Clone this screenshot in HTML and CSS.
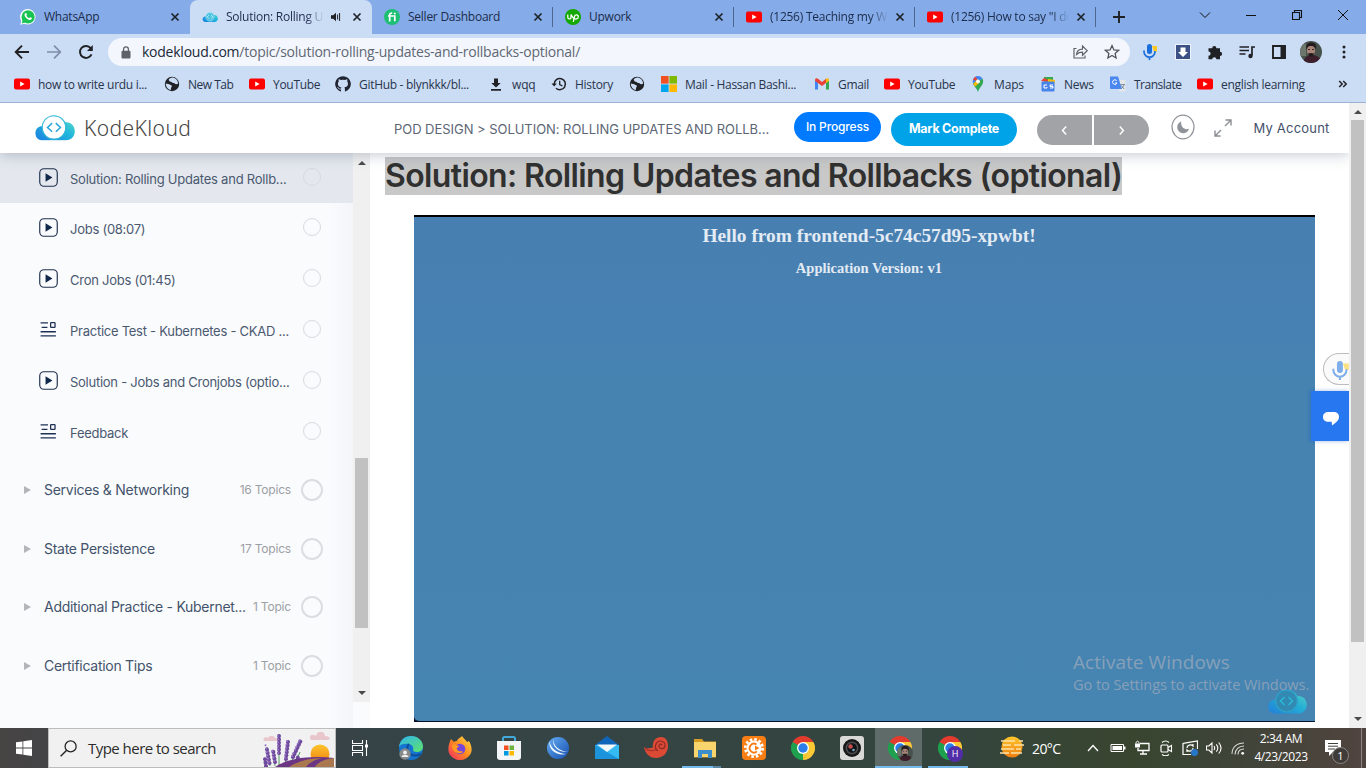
FILE: index.html
```html
<!DOCTYPE html>
<html lang="en">
<head>
<meta charset="utf-8">
<title>Solution: Rolling Updates and Rollbacks</title>
<link rel="stylesheet" href="styles.css">
</head>
<body>
<svg class="defs" width="0" height="0" aria-hidden="true">
  <defs>
    <linearGradient id="cl1" x1="0" y1="1" x2="1" y2="0"><stop offset="0" stop-color="#1b7fe0"/><stop offset=".55" stop-color="#1fb6dc"/><stop offset="1" stop-color="#5fe0c4"/></linearGradient>
    <linearGradient id="edg" x1="0" y1="0" x2="1" y2="1"><stop offset="0" stop-color="#2fb5ee"/><stop offset="1" stop-color="#5fe36b"/></linearGradient>
    <linearGradient id="ff" x1="1" y1="0" x2="0" y2="1"><stop offset="0" stop-color="#ffe14a"/><stop offset=".5" stop-color="#ff8a1f"/><stop offset="1" stop-color="#f5246a"/></linearGradient>
    <linearGradient id="sun" x1="0" y1="0" x2="0" y2="1"><stop offset="0" stop-color="#fdc62c"/><stop offset="1" stop-color="#ef7d10"/></linearGradient>
    <linearGradient id="ball" x1="0" y1="0" x2="1" y2="1"><stop offset="0" stop-color="#65aef5"/><stop offset="1" stop-color="#174fae"/></linearGradient>
    <symbol id="x" viewBox="0 0 10 10"><path d="M1.500 1.500l7 7m0-7l-7 7" stroke="#1f2328" stroke-width="1.700"/></symbol>
    <symbol id="yt" viewBox="0 0 16 16"><rect y="2.400" width="16" height="11.200" rx="2" fill="#f00"/><path d="M6.200 5.600v4.800L10.600 8z" fill="#fff"/></symbol>
    <symbol id="globe" viewBox="0 0 16 16"><circle cx="8" cy="8" r="7.200" fill="#202124"/><path d="M8.600 1.600c-2 .2-3.600 1.200-4 2.500 1 .6.500 1.800 2.200 1.700 1.500 0 1.100 1.500 2.700 1.300 1.300-.2 1.200 1.200 2.600 1.200l2-.6c0-3-2.300-5.700-5.500-6.100zM1.800 7.600c1.500.3 3 .4 4.700 1.500 1.600.3 1.700 1.300.9 2.100-.7.8-.2 1.600-.6 2.900-3-.7-5.100-3.400-5-6.500z" fill="#cbdcf5"/></symbol>
    <symbol id="cloud" viewBox="0 0 40 25"><path d="M7 24.500a7 7 0 0 1-.5-13.600c.8 0 1.600-.1 2.500.2A11.500 11.500 0 0 1 30.500 7c5.500-.6 9.300 3.600 9.300 8.700 0 5-3.600 8.800-8.400 8.800z" fill="url(#cl1)"/></symbol>
    <symbol id="play" viewBox="0 0 18 18"><rect x=".7" y=".7" width="16.600" height="16.600" rx="4" fill="none" stroke="#1e2f4d" stroke-width="1.100"/><path d="M6.200 5v8l6.500-4z" fill="#12284b"/></symbol>
    <symbol id="quiz" viewBox="0 0 18 18"><path d="M1.500 2.700H8.500M2.500 7h5.500M1.500 11.100H16M1.500 15H16" stroke="#1e2f55" stroke-width="1.300"/><rect x="11" y="2.500" width="4.200" height="4.500" rx=".6" fill="none" stroke="#1e2f55" stroke-width="1.200"/></symbol>
    <symbol id="chrome" viewBox="0 0 24 24"><path d="M12 12L1.600 6A12 12 0 0 1 22.400 6z" fill="#e33b2e"/><path d="M12 12L22.400 6A12 12 0 0 1 12 24z" fill="#fcc934"/><path d="M12 12v12A12 12 0 0 1 1.600 6z" fill="#1fa04f"/><path d="M12 6h10.400L17 13z" fill="#fcc934"/><path d="M6.800 15L1.600 6 12 6z" fill="#1fa04f"/><path d="M12 6H1.600L7 9z" fill="#e33b2e"/><path d="M17.200 15L12 24 7 15z" fill="#1fa04f"/><path d="M17.200 15L12 24v-6z" fill="#fcc934"/><circle cx="12" cy="12" r="6" fill="#fff"/><circle cx="12" cy="12" r="4.700" fill="#2b7de9"/></symbol>
    <symbol id="face" viewBox="0 0 22 22"><clipPath id="fc"><circle cx="11" cy="11" r="11"/></clipPath><g clip-path="url(#fc)"><path fill="#48524c" d="M0 0h22v22H0z"/><path fill="#6d766b" d="M0 3h6v12H0z"/><path fill="#3c1f2b" d="M3 22c1-6 5-8 9-8s7 2 10 5v5z"/><ellipse cx="11" cy="9.500" rx="4" ry="5.500" fill="#a98679"/><path d="M6.500 8.500c-1-5 1-7 5-7s5.500 3 4.300 7C15 6 14 5 11 5S7.500 6 6.500 8.500zM8 12.500c2-.8 4-.8 6 0l-1 3h-4z" fill="#241b1c"/><path d="M8 8.500h2m2 0h2" stroke="#332323"/></g></symbol>
    <symbol id="mic" viewBox="0 0 16 16"><path fill="#f9c921" d="M10 2h5v5.500h-3z"/><rect x="5" y="0" width="5" height="10" rx="2.500" fill="#1a6fdc"/><path d="M2 6.500v1.200a5.500 5.500 0 0 0 11 0V7M7.500 13v3" fill="none" stroke="#1a6fdc" stroke-width="1.700"/></symbol>
  </defs>
</svg>

<div class="screen">
  <div class="tabstrip">
    <div class="tab first"><svg class="fav" viewBox="0 0 16 16"><path d="M.3 15.700L1.300 12A7.700 7.700 0 1 1 4.300 14.700z" fill="#fff"/><circle cx="8.100" cy="7.900" r="6.600" fill="#18c351"/><path d="M1.700 14.500l1-3.500 2.500 2.500z" fill="#18c351"/><path d="M5.200 4.300c.8-.6 1.200-.2 1.700 1.200.2.500-.6.800-.5 1.200.6 1.200 1.600 2 2.700 2.300.4 0 .7-1 1.200-.8l1.600.9c.1 1-.8 1.900-2 1.900C7 10.700 4.300 7.500 4.500 5.600z" fill="#fff"/></svg><span class="ttl">WhatsApp</span><svg class="cls"><use href="#x"/></svg></div>
    <div class="tab active"><svg class="fav" viewBox="0 -5 40 34"><use href="#cloud" width="40" height="25"/><circle cx="20" cy="11.500" r="10.500" fill="#4fc3df" stroke="#b9e4f5" stroke-width="1.500"/><path d="M17 7.500l-4 4 4 4m6-8l4 4-4 4" fill="none" stroke="#d5f3fa" stroke-width="2"/></svg><span class="ttl short">Solution: Rolling Updates</span><svg class="snd" viewBox="0 0 12 10"><path d="M1 3.300h2.200L6 .8v8.400L3.200 6.700H1z" fill="#202124"/><path d="M7.600 2.500v5M9.600 1v8" stroke="#202124" stroke-width="1"/></svg><svg class="cls"><use href="#x"/></svg></div>
    <div class="tab nosep"><svg class="fav" viewBox="0 0 16 16"><circle cx="8" cy="8" r="8" fill="#1dbf73"/><path d="M4 7h6.800v5.300M5.700 12.500V5.700C5.700 4.400 6.600 4 8.200 4.200" fill="none" stroke="#fff" stroke-width="1.700"/><circle cx="10.800" cy="4.500" r="1" fill="#fff"/></svg><span class="ttl">Seller Dashboard</span><svg class="cls"><use href="#x"/></svg></div>
    <div class="tab"><svg class="fav" viewBox="0 0 16 16"><circle cx="8" cy="8" r="8" fill="#14a800"/><path d="M2.800 5.500v2.800c0 2.200 3.200 2.200 3.200 0V5.500c1 2 2 3.500 3 4M8.300 12.800L9.500 7.500c.6-2.500 4-2 3.800.5-.2 2.300-3 2.500-4.300 1.300" fill="none" stroke="#fff" stroke-width="1.300"/></svg><span class="ttl">Upwork</span><svg class="cls"><use href="#x"/></svg></div>
    <div class="tab"><svg class="fav"><use href="#yt"/></svg><span class="ttl long">(1256) Teaching my Wife</span><svg class="cls"><use href="#x"/></svg></div>
    <div class="tab"><svg class="fav"><use href="#yt"/></svg><span class="ttl long">(1256) How to say "I don't</span><svg class="cls"><use href="#x"/></svg></div>
    <svg class="newtab" viewBox="0 0 12 12"><path d="M6 0v12M0 6h12" stroke="#202124" stroke-width="1.900"/></svg>
    <div class="winbtns">
      <svg viewBox="0 0 12 12"><path d="M1 3.500l5 5 5-5" fill="none" stroke="#111" /></svg>
      <svg viewBox="0 0 12 12"><path d="M1 6.500h10" stroke="#111"/></svg>
      <svg viewBox="0 0 12 12"><path d="M1.500 3.500h7v7h-7zM3.500 3.500v-2h7v7h-2" fill="none" stroke="#111" stroke-width="1.100"/></svg>
      <svg viewBox="0 0 12 12"><path d="M1 1l10 10M11 1L1 11" stroke="#111"/></svg>
    </div>
  </div>

  <div class="toolbar">
    <svg class="nav" viewBox="0 0 16 16"><path d="M15 8H2m6-6.300L1.700 8 8 14.300" fill="none" stroke="#202124" stroke-width="1.900"/></svg>
    <svg class="nav" viewBox="0 0 16 16"><path d="M1 8h13M8 1.700L14.300 8 8 14.300" fill="none" stroke="#7e8da9" stroke-width="1.700"/></svg>
    <svg class="nav" viewBox="0 0 16 16"><path d="M13.500 10.300A6 6 0 1 1 12.700 4.200" fill="none" stroke="#202124" stroke-width="2"/><path d="M14.800 1v6H9z" fill="#202124"/></svg>
    <div class="omni">
      <svg class="lock" viewBox="0 0 10 13"><rect x=".5" y="4.700" width="9" height="7.800" rx="1" fill="#5f6368"/><path d="M2.600 5V3.300a2.400 2.400 0 0 1 4.800 0V5" fill="none" stroke="#5f6368" stroke-width="1.300"/></svg>
      <span class="url"><b>kodekloud.com</b>/topic/solution-rolling-updates-and-rollbacks-optional/</span>
      <svg class="share" viewBox="0 0 16 16"><path d="M4 4.500H1.500V14h11v-2.500M4 10.500c.3-3.500 2.500-5.300 6-5.400V2l4.700 4.700-4.700 4.600V8.200C7.300 8.200 5.500 9 4 10.500z" fill="none" stroke="#5f6368" stroke-width="1.200"/></svg>
      <svg class="star" viewBox="0 0 16 16"><path d="M8 1.600l1.900 4.300 4.700.4-3.500 3.100 1 4.600L8 11.500 3.900 14l1-4.600L1.400 6.300l4.700-.4z" fill="none" stroke="#50565d" stroke-width="1.300"/></svg>
    </div>
    <div class="exts">
      <svg viewBox="0 0 16 16"><use href="#mic"/></svg>
      <svg viewBox="0 0 16 16"><path fill="#eef4ff" d="M0 0h16v16H0z"/><path fill="#3b5185" d="M1 1h14v14H1z"/><path d="M5.500 3.500h5V8H13l-5 5-5-5h2.500z" fill="#fff"/></svg>
      <svg viewBox="0 0 16 16"><path d="M1.500 4.200h3.700a2.100 2.100 0 1 1 4.200 0h3.600v3.600a2.100 2.100 0 1 1 0 4.200v3.300H9.400a2.100 2.100 0 0 0-4.200 0H1.500v-3.500a2.100 2.100 0 0 0 0-4.200z" fill="#202124"/></svg>
      <svg viewBox="0 0 16 16"><path d="M.5 3h9.500M.5 6.500h9.500M.5 10h6M13 11.500V3h3" fill="none" stroke="#202124" stroke-width="1.700"/><circle cx="11.500" cy="12" r="2.200" fill="#202124"/></svg>
      <svg viewBox="0 0 16 16"><path d="M2 2h12v12H2z" fill="none" stroke="#202124" stroke-width="1.900"/><path d="M9.500 2h5v12h-5z" fill="#202124"/></svg>
      <svg class="avatar"><use href="#face"/></svg>
      <svg class="dots" viewBox="0 0 16 16"><circle cx="8" cy="3" r="1.500"/><circle cx="8" cy="8" r="1.500"/><circle cx="8" cy="13" r="1.500"/></svg>
    </div>
  </div>

  <div class="bookmarks">
    <div class="bm w151"><svg><use href="#yt"/></svg><span>how to write urdu i...</span></div>
    <div class="bm w85"><svg><use href="#globe"/></svg><span class="tight">New Tab</span></div>
    <div class="bm w86"><svg><use href="#yt"/></svg><span>YouTube</span></div>
    <div class="bm w153"><svg viewBox="0 0 16 16"><path d="M8 .2a7.800 7.800 0 0 0-2.500 15.200c.4.1.5-.2.5-.4v-1.500c-2.100.5-2.600-.9-2.600-.9-.4-.9-.9-1.100-.9-1.100-.7-.5 0-.5 0-.5.8 0 1.200.8 1.200.8.7 1.200 1.800.9 2.300.7 0-.5.3-.9.5-1.100-1.700-.2-3.600-.9-3.600-3.900 0-.8.3-1.500.8-2.100 0-.2-.3-1 .1-2.100 0 0 .7-.2 2.200.8a7.300 7.300 0 0 1 4 0c1.500-1 2.100-.8 2.100-.8.5 1.100.2 1.900.1 2.100.5.6.8 1.300.8 2.100 0 3-1.900 3.700-3.600 3.900.3.200.5.7.5 1.400V15c0 .2.200.5.6.4A7.800 7.800 0 0 0 8 .2z" fill="#1f2430"/></svg><span>GitHub - blynkkk/bl...</span></div>
    <div class="bm w63"><svg viewBox="0 0 16 16"><path d="M6 2.500h4V7h2.700L8 11.500 3.300 7H6zM3 13h10v1.700H3z" fill="#202124"/></svg><span class="wide">wqq</span></div>
    <div class="bm w78"><svg viewBox="0 0 16 16"><path d="M3.200 8a5.600 5.600 0 1 1 1.800 4.200" fill="none" stroke="#202124" stroke-width="1.500"/><path d="M.5 7.500h5.300L3.200 10.500z" fill="#202124"/><path d="M8.700 4.800v3.700l2.800 1.500" fill="none" stroke="#202124" stroke-width="1.300"/></svg><span>History</span></div>
    <div class="bm w32"><svg><use href="#globe"/></svg></div>
    <div class="bm w153"><svg viewBox="0 0 16 16"><path fill="#f25022" d="M0 0h7.600v7.600H0z"/><path fill="#7fba00" d="M8.400 0H16v7.600H8.400z"/><path fill="#00a4ef" d="M0 8.400h7.600V16H0z"/><path fill="#ffb900" d="M8.400 8.400H16V16H8.400z"/></svg><span>Mail - Hassan Bashi...</span></div>
    <div class="bm w70"><svg viewBox="0 0 16 16"><path d="M1 4v9.500h3V6.500z" fill="#4285f4"/><path d="M15 4v9.500h-3V6.500z" fill="#34a853"/><path d="M1 4c0-2 2-2 3-1.200l4 3.200 4-3.200V7L8 10 1 4.700z" fill="#ea4335"/><path d="M12 2.800c1.500-1 3-.3 3 1.200v1l-3 2.300z" fill="#fbbc04"/></svg><span>Gmail</span></div>
    <div class="bm w86"><svg><use href="#yt"/></svg><span>YouTube</span></div>
    <div class="bm w70"><svg viewBox="0 0 16 16"><path d="M8 16C7.500 12 2.700 10 2.700 5.500A5.300 5.300 0 0 1 8 0v5.500z" fill="#4285f4"/><path d="M3 4A5.400 5.400 0 0 1 6 .5L8 5z" fill="#ea4335"/><path d="M6 .5a5.400 5.400 0 0 1 6.600 2.200L8 6z" fill="#4285f4"/><path d="M3.200 7.500l9.400-4.800C15 8.500 9 11 8 16c-.4-3-3.600-5-4.800-8.500z" fill="#34a853"/><path d="M3.200 7.800L8 3l1 4-4 3.800z" fill="#fbbc04"/><circle cx="8" cy="5.400" r="1.900" fill="#fff"/></svg><span class="wide">Maps</span></div>
    <div class="bm w70"><svg viewBox="0 0 16 16"><path d="M4 1h9v7H4z" fill="#34a853"/><path d="M1 5l3-3 9 4z" fill="#ea4335"/><path d="M8 3l7 1-1 6H8z" fill="#fbbc04"/><rect x="1.500" y="5.500" width="13" height="10" rx="1" fill="#4a84e8"/><path d="M7 9H4v3h3v-1M13 9h-3v1.500h3V12h-3" stroke="#fff" fill="none"/></svg><span>News</span></div>
    <div class="bm w87"><svg viewBox="0 0 16 16"><path d="M7 4h8.500v11.500H9z" fill="#e4e7ea"/><path d="M0 .5h8L12 13H1a1 1 0 0 1-1-1z" fill="#4a87ee"/><path d="M6.700 4.700A2.300 2.300 0 1 0 7 7H5" fill="none" stroke="#fff" stroke-width="1"/><path d="M10.500 8.500H15m-1 0c-.5 2-1.500 3-2.500 4m0-3l2.500 3.500" fill="none" stroke="#708399" stroke-width=".9"/></svg><span class="tight">Translate</span></div>
    <div class="bm"><svg><use href="#yt"/></svg><span>english learning</span></div>
    <svg class="more" viewBox="0 0 10 8"><path d="M1.200 1l3 3-3 3m4-6l3 3-3 3" fill="none" stroke="#202124" stroke-width="1.500"/></svg>
  </div>

  <div class="page">
    <div class="site">
      <header class="head">
        <div class="logo"><svg class="cl" viewBox="0 0 40 25"><use href="#cloud" width="40" height="25"/><circle cx="19.500" cy="12" r="11" fill="#fff"/><circle cx="19.500" cy="12" r="11.500" fill="none" stroke="#35b9da" stroke-width="1"/><path d="M17.700 7.800L13.200 12l4.500 4.200m3.600-8.400l4.500 4.200-4.500 4.200" fill="none" stroke="#28a7d9" stroke-width="1.500"/></svg><span>KodeKloud</span></div>
        <div class="crumb">POD DESIGN &gt; SOLUTION: ROLLING UPDATES AND ROLLB...</div>
        <div class="pill">In Progress</div>
        <div class="btn">Mark Complete</div>
        <div class="pager"><i><svg viewBox="0 0 8 8"><path d="M5.500 .5L2.300 4l3.200 3.500" fill="none" stroke="#fff" stroke-width="1.300"/></svg></i><i><svg viewBox="0 0 8 8"><path d="M2.500 .5L5.700 4 2.500 7.500" fill="none" stroke="#fff" stroke-width="1.300"/></svg></i></div>
        <svg class="moon" viewBox="0 0 24 26"><ellipse cx="12" cy="13" rx="11" ry="11.800" fill="none" stroke="#8f9297" stroke-width="1.200"/><path d="M10.200 7.500a6 6 0 1 0 7.800 7.300c-4.500 1.500-8.500-2-7.800-7.300z" fill="#909399"/></svg>
        <svg class="expand" viewBox="0 0 18 18"><path d="M11.500 1H17v5.500M17 1l-6 6M6.500 17H1v-5.500M1 17l6-6" fill="none" stroke="#8b8e93" stroke-width="1.400"/></svg>
        <span class="acct">My Account</span>
      </header>
      <div class="content">
        <aside class="side">
          <nav class="list">
            <div class="les cur"><svg><use href="#play"/></svg><span>Solution: Rolling Updates and Rollb...</span><i></i></div>
            <div class="les"><svg><use href="#play"/></svg><span>Jobs (08:07)</span><i></i></div>
            <div class="les"><svg><use href="#play"/></svg><span>Cron Jobs (01:45)</span><i></i></div>
            <div class="les"><svg><use href="#quiz"/></svg><span>Practice Test - Kubernetes - CKAD ...</span><i></i></div>
            <div class="les"><svg><use href="#play"/></svg><span>Solution - Jobs and Cronjobs (optio...</span><i></i></div>
            <div class="les"><svg><use href="#quiz"/></svg><span>Feedback</span><i></i></div>
            <div class="sec"><b></b><span>Services &amp; Networking</span><em>16 Topics</em><i></i></div>
            <div class="sec"><b></b><span>State Persistence</span><em>17 Topics</em><i></i></div>
            <div class="sec"><b></b><span>Additional Practice - Kubernet...</span><em>1 Topic</em><i></i></div>
            <div class="sec"><b></b><span>Certification Tips</span><em>1 Topic</em><i></i></div>
          </nav>
          <div class="sbar"><svg viewBox="0 0 8 4"><path d="M0 4l4-4 4 4z"/></svg><div class="thumb"></div><svg viewBox="0 0 8 4"><path d="M0 0l4 4 4-4z"/></svg></div>
        </aside>
        <main class="main">
          <h1><span>Solution: Rolling Updates and Rollbacks (optional)</span></h1>
          <div class="video">
            <div class="frame">
              <h2>Hello from frontend-5c74c57d95-xpwbt!</h2>
              <h3>Application Version: v1</h3>
              <svg class="vlogo" viewBox="0 0 40 25"><use href="#cloud" width="40" height="25"/><circle cx="19.500" cy="12" r="10.800" fill="#2f8cb4" stroke="#2aa6cf" stroke-width="1.300"/><path d="M17.500 8L13.500 12l4 4m4-8l4 4-4 4" fill="none" stroke="#26c3df" stroke-width="1.400"/></svg>
            </div>
          </div>
        </main>
      </div>
      <div class="micfab"><svg viewBox="0 0 16 16"><use href="#mic"/></svg></div>
      <div class="chat"><svg viewBox="0 0 16 14"><path d="M5.500 0h5C14 0 16 2 16 4.800c0 3-2 5.200-7 8.800L8.700 9.800H5.500C2 9.800 0 8 0 5s2-5 5.500-5z" fill="#fff"/></svg></div>
    </div>
    <div class="pbar"><svg viewBox="0 0 8 4"><path d="M0 4l4-4 4 4z"/></svg><div class="pthumb"></div><svg viewBox="0 0 8 4"><path d="M0 0l4 4 4-4z"/></svg></div>
  </div>

  <div class="taskbar">
    <div class="start"><svg viewBox="0 0 16 16"><path d="M0 2.300L6.500 1.400v6.200H0zM7.300 1.300L16 0v7.600H7.300zM0 8.400h6.500v6.200L0 13.700zM7.300 8.400H16V16l-8.700-1.300z" fill="#fff"/></svg></div>
    <div class="search"><svg class="mag" viewBox="0 0 16 16"><circle cx="10" cy="6" r="5.200" fill="none" stroke="#222" stroke-width="1.200"/><path d="M6.300 9.700L.6 15.400" stroke="#222" stroke-width="1.300"/></svg><span>Type here to search</span>
      <svg class="art" viewBox="0 0 74 38"><path d="M3 12c-2-3 2-5 4-3 1-3 6-3 7 0 4 0 4 3 1 3H4zM50 11c-3-4 1-7 5-4 1-6 9-5 9 0 6 0 6 4 2 4H51z" fill="#e9c6cb"/><circle cx="59" cy="25" r="9.500" fill="url(#sun)"/><path d="M18 37V5M9 37L6 18M24 37l3-23M30 34L40 12M14 37L12 21M33 37l6-14" stroke="#4f9a5d" stroke-width="1"/><g fill="none" stroke-linecap="round"><path stroke="#6d4a9c" stroke-width="4" stroke-dasharray=".1 3.300" d="M18 24V5M8.500 34L5.500 18M25 30l2-17M32 28L40 11M14 33L12 21M5 37l-1-7M34 35l4-9"/><path stroke="#9a74c4" stroke-width="2" stroke-dasharray=".1 3.300" d="M17 24V4M7.500 33L4.500 16M24 29l2-17M31 27L39 10M13 32L11 20"/></g><path d="M14 38c10-7 30-12 59-9v9z" fill="#6b3584"/><path d="M28 38c9-6 20-9 33-9-8 2-13 5-16 9zM54 38c3-5 10-8 19-9v9z" fill="#a9784e"/></svg>
    </div>
    <div class="apps">
      <div class="app"><svg class="tv" viewBox="0 0 16 16"><path d="M.5 0v3.500h10V0M.5 16v-3.500h10V16M.5 5.500h10v5H.5zM14.500 0v16" fill="none" stroke="#fff" stroke-width="1.100"/><path d="M13 4.500h3v3h-3z" fill="#fff"/></svg></div>
      <div class="app"><svg viewBox="0 0 24 24"><circle cx="12" cy="12" r="12" fill="#1474cf"/><path d="M0 11C1 3 7 0 12 0c7 0 12 5 12 10.500 0 4-3 5.500-6 5.500-3 0-4-1-4-2 1-2 0-5-4-6S1 8 0 11z" fill="url(#edg)"/><path d="M10 8c-3 3-2 9 3 11 4 1.500 7 0 9-1" fill="none" stroke="#0d4f9c" stroke-width="2"/><circle cx="6" cy="18" r="5.700" fill="#87898b"/><circle cx="6" cy="16.500" r="1.900" fill="#eee"/><path d="M2.500 21c.5-3 6.500-3 7 0z" fill="#eee"/></svg></div>
      <div class="app"><svg viewBox="0 0 24 24"><path d="M3 3l3 3c1-1 2-1 3-1 1-3 3-3 5-5 1 2 3 3 5 6l2-1c3 5 4 11 0 15a12 12 0 0 1-18 0C-1 16 0 9 3 3z" fill="url(#ff)"/><circle cx="12" cy="13" r="5.300" fill="#7746d8"/><path d="M4 9c3-1 6 0 7 2-3 0-3 3 0 4 2 .5 3 0 4 1-3 3-11 1-11-7z" fill="#ff9a22"/></svg></div>
      <div class="app"><svg viewBox="0 0 24 24"><path d="M6 6V2.500C6 1.500 6.500 1 7.500 1h9c1 0 1.500.5 1.500 1.500V6" fill="none" stroke="#43a9da" stroke-width="2"/><path d="M0 5h24v16a3 3 0 0 1-3 3H3a3 3 0 0 1-3-3z" fill="#f3f5f7"/><path fill="#f25022" d="M7 9.500h4.500V14H7z"/><path fill="#6db33f" d="M12.500 9.500H17V14h-4.500z"/><path fill="#0099df" d="M7 15h4.500v4.500H7z"/><path fill="#ffb900" d="M12.500 15H17v4.500h-4.500z"/></svg></div>
      <div class="app"><svg viewBox="0 0 24 24"><circle cx="12" cy="12" r="11" fill="url(#ball)"/><path d="M3.500 5c1 7 7 12 16.500 13C11 20 2 14 3.500 5zM7 3c.5 7 6 12 15 13C13 17 6 11 7 3z" fill="#eef7ff"/></svg></div>
      <div class="app"><svg viewBox="0 0 24 24"><path d="M0 9L12 0l12 9z" fill="#1065b8"/><path d="M0 9h24v14H0z" fill="#35baf1"/><path d="M0 23h24L0 9z" fill="#1b94dc"/><path d="M2 8.500h20L12 16z" fill="#f5f8fb"/></svg></div>
      <div class="app"><svg viewBox="0 0 24 24"><path d="M0 11c2 1.500 5 1.700 9 .5C8 5 12 1 17 1c5 0 7 4 7 9 0 7-5 12-12 12C5 22 1 17 0 11z" fill="#dc4a36"/><path d="M1 12c3 3 8 3.500 12 1" fill="none" stroke="#a3352b" stroke-width="1.300"/><path d="M18 9.500c0-2-3-1.700-3 .5 0 3.500 6 3.500 6-.5 0-4.500-6-6-8.500-2.500-2 3-1.300 6.500 1.500 8" fill="none" stroke="#8a2a27" stroke-width="1.200"/></svg></div>
      <div class="app on"><svg viewBox="0 0 24 24"><path d="M1 3h8l2 2.500h12v16H1z" fill="#d89d22"/><path d="M1 6h22v15H1z" fill="#f8d66d"/><path d="M5 22v-8h14v8h-4v-4H9v4z" fill="#3d8ecb"/></svg></div>
      <div class="app"><svg viewBox="0 0 24 24"><rect width="24" height="24" rx="4" fill="#f77d15"/><circle cx="12" cy="12" r="8.700" fill="none" stroke="#fff" stroke-width="2.600" stroke-dasharray="2.600 1.950"/><circle cx="12" cy="12" r="7.500" fill="#fff"/><path d="M14.500 8.400a4.400 4.400 0 1 0 .5 7" fill="none" stroke="#f77d15" stroke-width="1.800"/><path d="M13 9.500l4.500 2.500-4.500 2.500z" fill="#f77d15"/></svg></div>
      <div class="app"><svg viewBox="0 0 24 24"><use href="#chrome"/></svg></div>
      <div class="app"><svg viewBox="0 0 24 24"><rect width="24" height="24" rx="3" fill="#d9d9d7"/><circle cx="12" cy="12" r="9" fill="#171717"/><circle cx="12" cy="12" r="6.500" fill="#4b4c4e"/><circle cx="12" cy="12" r="4.800" fill="#101318"/><circle cx="10.500" cy="10.500" r="2.200" fill="#c34e4e"/><circle cx="13.500" cy="14" r="1.300" fill="#79a6b7"/></svg></div>
      <div class="app live"><svg viewBox="0 0 24 24"><use href="#chrome"/></svg><svg class="pf" viewBox="0 0 22 22"><use href="#face" width="22" height="22"/></svg></div>
      <div class="app on2"><svg viewBox="0 0 24 24"><use href="#chrome"/></svg><span class="badge">H</span></div>
    </div>
    <div class="tray">
      <svg class="wx" viewBox="0 0 24 24"><circle cx="12" cy="11" r="10.500" fill="url(#sun)"/><path d="M1 5h14m4 0h4M3 9h8m3 0h10M1 13h13m2 0h5M0 17h9m2 0h11" stroke="#ffe2a8" stroke-width="1.500"/></svg>
      <span class="deg">20°C</span>
      <svg class="chev" viewBox="0 0 12 8"><path d="M1 7l5-5.500L11 7" fill="none" stroke="#fff" stroke-width="1.300"/></svg>
      <div class="icons">
      <svg viewBox="0 0 16 16"><path d="M1 4.500h12.500v7H1z" fill="none" stroke="#fff"/><path d="M2.500 6h9.500v4H2.500zM14 6.500h1.500v3H14z" fill="#fff"/></svg>
      <svg viewBox="0 0 16 16"><path d="M6 3.500h9v7H4V8M9 10.500V14M6 14h7" fill="none" stroke="#fff" stroke-width="1.300"/><path d="M1 3.500h5v4H1z" fill="#fff"/><path d="M2 3.500c0-3 3-3 3 0" fill="none" stroke="#fff"/></svg>
      <svg viewBox="0 0 16 16"><rect x="3" y="5" width="7" height="7" rx="1" fill="none" stroke="#fff" stroke-width="1.200"/><path d="M10 7.500l3.500-2v6L10 9.500M4 2.500C6 .5 9 .5 11 2.500M4 14.500c2 1.500 5 1.500 7 0" fill="none" stroke="#fff" stroke-width="1.100"/></svg>
      <svg viewBox="0 0 16 16"><path d="M9 14.500H1V3.500l3-.7L15.500 1v8" fill="none" stroke="#fff" stroke-width="1.200"/><path d="M5 8c0-3 4-4 6-2V4M11 8c0 3-4 4-6 2v2" fill="none" stroke="#fff" stroke-width="1.200"/><circle cx="12.500" cy="12.500" r="3.500" fill="#2676c9"/></svg>
      <svg viewBox="0 0 16 16"><path d="M.5 6h2.300L6 3v10L2.800 10H.5zM8 6c1 1.500 1 2.500 0 4M10.300 4.300c2 2.500 2 5 0 7.400M12.700 2.500c3 3.500 3 7.500 0 11" fill="none" stroke="#fff" stroke-width="1.100"/></svg>
      <svg viewBox="0 0 16 16"><path d="M2 14C2 7 7 3 14 3M5 14.500c0-5 4-8.500 9-8.500M8 14.500C8 11 10.500 9 14 9" fill="none" stroke="#d8dbd6" stroke-width="1.100"/><circle cx="12.700" cy="13.300" r="1.400" fill="#fff"/></svg>
      </div>
      <div class="clock"><span>2:34 AM</span><span>4/23/2023</span></div>
      <div class="note"><svg viewBox="0 0 16 16"><path d="M0 0h16v12H8l-4 4v-4H0z" fill="#fff"/><path d="M3 3.500h10M3 6.200h10M3 9h7" stroke="#40423e"/></svg><span>1</span></div>
      <div class="desk"></div>
    </div>
  </div>
  <div class="wm"><p>Activate Windows</p><span>Go to Settings to activate Windows.</span></div>
</div>
</body>
</html>
```
FILE: styles.css
```css
* { box-sizing: border-box; }
body { margin: 0; width: 1366px; height: 768px; overflow: hidden; font-family: "Open Sans", sans-serif; }
svg { display: block; flex: none; }
.defs { position: absolute; }
.screen { position: relative; width: 1366px; height: 768px; display: flex; flex-direction: column; }

/* browser chrome */
.tabstrip { height: 34px; flex: none; background: #85abe8; display: flex; padding-left: 8px; align-items: center; }
.tab { width: 181px; height: 34px; flex: none; display: flex; align-items: center; padding: 0 10px 0 12px; position: relative; font-size: 12px; letter-spacing: -.25px; color: #1c2c4b; }
.tab.first { width: 182px; }
.tab:nth-child(n+3)::after { content: ""; position: absolute; right: 0; top: 7px; height: 20px; border-right: 1px solid #4d668f; }
.tab.active { width: 182px; background: #cbdcf5; border-radius: 8px 8px 0 0; padding-right: 10px; }
.fav { width: 16px; height: 16px; margin-right: 8px; }
.ttl { white-space: nowrap; overflow: hidden; flex: none; width: 118px; line-height: 18px; }
.ttl.long { -webkit-mask-image: linear-gradient(90deg, #000 85%, transparent); mask-image: linear-gradient(90deg, #000 85%, transparent); }
.ttl.short { width: 98px; -webkit-mask-image: linear-gradient(90deg, #000 82%, transparent); mask-image: linear-gradient(90deg, #000 82%, transparent); }
.snd { width: 12px; height: 10px; margin-left: 6px; }
.cls { width: 10px; height: 10px; margin-left: auto; }
.newtab { width: 12px; height: 12px; margin-left: 17px; }
.winbtns { margin-left: auto; display: flex; gap: 34px; padding: 0 17px 5px 0; }
.winbtns svg { width: 12px; height: 12px; }
.toolbar { height: 36px; flex: none; background: #cbdcf5; display: flex; align-items: center; padding-left: 14px; }
.nav { width: 16px; height: 16px; margin-right: 16px; }
.omni { width: 1022px; height: 28px; margin-left: -2px; background: #f3f7fd; border-radius: 14px; display: flex; align-items: center; padding-left: 13px; }
.lock { width: 10px; height: 13px; }
.url { font-size: 14px; letter-spacing: -.24px; color: #5f6774; margin-left: 11px; flex: 1; line-height: 20px; padding-bottom: 1px; }
.url b { font-weight: 400; color: #202938; }
.share { width: 17px; height: 16px; margin-right: 15px; }
.star { width: 16px; height: 16px; margin-right: 10px; }
.exts { display: flex; align-items: center; gap: 16px; margin-left: 12px; }
.exts svg { width: 16px; height: 16px; }
.exts .avatar { width: 22px; height: 22px; margin: 0 -3px; }
.exts .dots { fill: #202124; margin-left: 1px; }
.exts svg:nth-child(2) { margin-left: 1px; }
.bookmarks { height: 33px; flex: none; background: #cbdcf5; border-bottom: 1px solid #9db1d3; display: flex; align-items: center; padding: 0 18px 4px 14px; }
.bm { display: flex; align-items: center; gap: 8px; flex: none; font-size: 12px; letter-spacing: -.3px; color: #28354b; white-space: nowrap; }
.bm svg { width: 16px; height: 16px; }
.bm .tight { letter-spacing: -.5px; }
.bm .wide { letter-spacing: -.15px; }
.w151 { width: 150px; } .w85 { width: 85px; } .w86 { width: 86px; } .w153 { width: 153px; }
.w63 { width: 63px; } .w78 { width: 78px; } .w32 { width: 32px; } .w70 { width: 70px; } .w87 { width: 87px; }
.more { width: 10px; height: 8px; margin-left: auto; }

/* site */
.page { height: 625px; flex: none; display: flex; }
.site { width: 1349px; position: relative; font-family: Inter, sans-serif; background: #fff; }
.head { position: relative; z-index: 2; height: 50px; background: #fff; box-shadow: 0 1px 14px rgba(40,60,90,.3); display: flex; align-items: center; clip-path: inset(0 0 -18px 0); }
.logo { width: 360px; margin-left: 34px; display: flex; align-items: center; }
.cl { width: 41px; height: 26px; }
.logo span { font-family: "Noto Sans", sans-serif; font-size: 21px; line-height: 26px; margin-left: 9px; color: #444; font-weight: 300; letter-spacing: .4px; }
.crumb { width: 400px; font-size: 13px; color: #5c6674; white-space: nowrap; padding-top: 2px; letter-spacing: -.04px; }
.pill { width: 87px; height: 30px; border-radius: 15px; background: #007bff; color: #fff; font-size: 12px; line-height: 30px; text-align: center; margin-top: -2px; font-weight: 500; letter-spacing: -.15px; }
.btn { width: 126px; height: 33px; border-radius: 17px; background: #00a2e8; color: #fff; font-size: 12.500px; font-weight: 700; line-height: 32px; text-align: center; margin: 2px 20px 0 10px; letter-spacing: -.25px; }
.pager { display: flex; gap: 1.500px; margin-top: 4px; }
.pager i { width: 55px; height: 30px; background: #a2a3a7; display: flex; align-items: center; justify-content: center; border-radius: 15px 0 0 15px; }
.pager i + i { border-radius: 0 15px 15px 0; }
.pager svg { width: 9px; height: 9px; }
.moon { width: 24px; height: 26px; margin: -2px 0 0 22px; }
.expand { width: 18px; height: 18px; margin: -1px 0 0 19px; }
.acct { font-size: 13px; letter-spacing: .2px; color: #42516a; margin-left: 22px; white-space: nowrap; }
.content { display: flex; height: 575px; }
.side { width: 370px; display: flex; background: #fafbfd; }
.list { width: 353px; background: linear-gradient(90deg, #fafbfd 93%, #f3f5f9); }
.les { height: 51px; display: flex; align-items: center; padding-left: 39px; font-size: 13px; letter-spacing: -.26px; color: #4a5970; }
.les svg { width: 19px; height: 19px; margin: -2px 12px 0 0; }
.les span { width: 232.500px; white-space: nowrap; padding-top: 1px; }
.les i { width: 18px; height: 18px; border: 1.500px solid #d8dade; border-radius: 50%; margin-top: -3px; }
.les.cur { height: 50px; background: #e4e8ee; }
.cur span { letter-spacing: -.23px; }
.cur i { border-color: #d7dade; }
.sec { height: 58.500px; display: flex; align-items: center; padding-left: 24px; font-size: 14px; letter-spacing: -.28px; color: #43536b; }
.les + .sec { margin-top: 2.500px; }
.sec b { border-left: 7px solid #b3b5b8; border-top: 4.500px solid transparent; border-bottom: 4.500px solid transparent; margin: 1px 13px 0 0; }
.sec span { flex: 1; white-space: nowrap; }
.sec em { font-style: normal; font-size: 12px; letter-spacing: -.2px; color: #9c9fa4; white-space: nowrap; }
.sec i { width: 22px; height: 22px; border: 2px solid #dcdde0; border-radius: 50%; margin: 1px 30px 0 10px; }
.sbar { width: 17px; height: 549px; background: #f0f0f0; display: flex; flex-direction: column; align-items: center; padding: 8px 0 7px; }
.sbar svg, .pbar svg { width: 8px; height: 4px; fill: #4a4a4a; }
.thumb { width: 13px; height: 170px; background: #c1c1c1; margin: 293px 0 auto; }
.main { width: 979px; background: #fff; }
h1 { margin: 4px 0 0 15px; font-size: 32px; line-height: 38px; font-weight: 600; color: #303030; letter-spacing: -.62px; height: 38px; white-space: nowrap; }
h1 span { display: inline-block; height: 38px; background: #c8c8c8; }
.video { margin: 20px 0 0 44px; width: 901px; height: 507px; background: #08122b; border-top: 2px solid #000; }
.frame { height: 504px; background: linear-gradient(#487fb1, #4780b2 22%, #4683b1 32%, #4684b2); border-radius: 0 0 0 5px; position: relative; display: flex; flex-direction: column; align-items: center; color: #e3ebf4; font-family: "Liberation Serif", serif; padding: 7px 0 0 9px; }
h2 { margin: 0; font-size: 19.400px; line-height: 24px; }
h3 { margin: 11px 0 0; font-size: 14.550px; line-height: 18px; }
.vlogo { position: absolute; right: 8px; bottom: 7px; width: 40px; height: 25px; opacity: .85; }
.micfab { position: absolute; left: 1323px; top: 250px; width: 26px; height: 32px; border: 1px solid #bcbcbf; border-right: 0; border-radius: 16px 0 0 16px; background: #fafafa; padding: 6px 0 0 7px; overflow: hidden; }
.micfab svg { width: 19px; height: 21px; opacity: .55; }
.chat { position: absolute; left: 1311px; top: 288px; width: 38px; height: 50px; background: #2777f1; box-shadow: -1px 0 4px rgba(20,80,180,.4); padding: 21px 0 0 12px; clip-path: inset(-4px 0 -4px -5px); }
.chat svg { width: 16px; height: 14px; }
.pbar { width: 17px; background: #f0f0f0; display: flex; flex-direction: column; align-items: center; padding: 7px 0; }
.pthumb { width: 13px; height: 522px; background: #c1c1c1; margin: 6px 0 auto; }

/* taskbar */
.taskbar { height: 40px; flex: none; display: flex; background: linear-gradient(90deg, #474444 0, #444446 48px, #374347 336px, #344542 700px, #34453e 950px, #39452f 1130px, #3b4436 1200px, #50443f 1366px); color: #fff; }
.start { width: 48px; padding: 12px 16px; }
.start svg { width: 16px; height: 16px; }
.search { width: 288px; height: 40px; background: #f1f1f1; border: 1px solid #bdbdbd; display: flex; align-items: center; color: #2c2c2c; font-size: 15px; padding-left: 11px; }
.mag { width: 17px; height: 17px; margin-right: 11px; }
.search span { width: 175px; letter-spacing: -.53px; white-space: nowrap; }
.art { width: 74px; height: 38px; }
.apps { display: flex; padding-left: 1px; }
.app { width: 49px; height: 40px; display: flex; align-items: center; justify-content: center; position: relative; }
.app > svg { width: 24px; height: 24px; }
.app > svg.tv { width: 16px; height: 16px; margin-right: 3px; }
.app.on::after { content: ""; position: absolute; left: 2px; bottom: 0; width: 39px; height: 2px; background: linear-gradient(90deg, #76b9ed 31px, #5b86a5 31px); }
.app.live { background: linear-gradient(#5e6b68, #5e6b68) 0 0 / 47px 40px no-repeat; padding-right: 1px; margin-left: -1px; width: 50px; }
.app.live::after, .app.on2::after { content: ""; position: absolute; left: 0; bottom: 0; width: 47px; height: 2px; background: #76b9ed; }
.app.on2::after { width: 40px; left: 3px; }
.app > svg.pf { position: absolute; left: 22px; top: 17px; width: 16px; height: 16px; }
.badge { position: absolute; left: 22px; top: 18px; width: 16px; height: 16px; border-radius: 50%; background: #512da8; font-size: 9px; line-height: 16px; text-align: center; }
.tray { margin-left: auto; display: flex; align-items: center; }
.wx { width: 24px; height: 24px; }
.deg { width: 30px; margin-left: 8px; font-size: 14px; letter-spacing: -.6px; white-space: nowrap; }
.chev { width: 12px; height: 8px; margin: 0 11px 0 25px; }
.icons { display: flex; gap: 8px; }
.icons svg { width: 16px; height: 16px; }
.clock { width: 64px; margin-left: 3px; font-size: 12px; line-height: 18px; letter-spacing: -.4px; display: flex; flex-direction: column; align-items: center; }
.note { position: relative; margin: 0 20px 0 12px; }
.note svg { width: 16px; height: 16px; }
.note span { position: absolute; left: 7px; top: 7px; width: 17px; height: 17px; border-radius: 50%; border: 1px solid #8b8785; background: #3f3b39; font-size: 11px; line-height: 15px; text-align: center; }
.desk { width: 5px; height: 40px; border-left: 1px solid #8a8583; }

.wm { position: absolute; left: 1073px; top: 650px; color: #87a0b8; white-space: nowrap; }
.wm p { margin: 0; font-size: 19px; line-height: 25px; letter-spacing: .05px; }
.wm span { display: block; font-size: 14.500px; line-height: 20px; letter-spacing: -.04px; }
```
